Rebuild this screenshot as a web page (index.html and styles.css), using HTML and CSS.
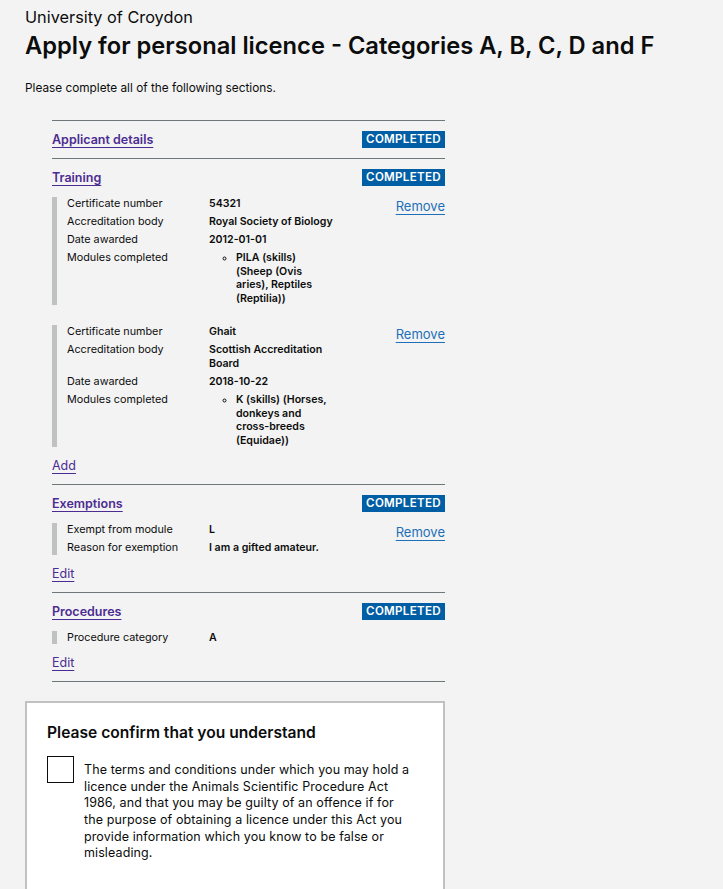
FILE: index.html
```html
<!DOCTYPE html>
<html lang="en">
<head>
<meta charset="utf-8">
<title>Apply for personal licence</title>
<link rel="stylesheet" href="styles.css">
</head>
<body>
<main class="page">
  <div class="org">University of Croydon</div>
  <h1 class="title">Apply for personal licence - Categories A, B, C, D and F</h1>
  <p class="intro">Please complete all of the following sections.</p>

  <div class="sections">
    <section class="section">
      <div class="section-head">
        <a class="section-link" href="#">Applicant details</a>
        <span class="tag">COMPLETED</span>
      </div>
    </section>

    <section class="section">
      <div class="section-head">
        <a class="section-link" href="#">Training</a>
        <span class="tag">COMPLETED</span>
      </div>
      <div class="entry">
        <dl class="rows">
          <dt>Certificate number</dt><dd>54321</dd>
          <dt>Accreditation body</dt><dd>Royal Society of Biology</dd>
          <dt>Date awarded</dt><dd>2012-01-01</dd>
          <dt>Modules completed</dt>
          <dd><ul class="modules"><li>PILA (skills) (Sheep (Ovis aries), Reptiles (Reptilia))</li></ul></dd>
        </dl>
        <a class="remove" href="#">Remove</a>
      </div>
      <div class="entry">
        <dl class="rows">
          <dt>Certificate number</dt><dd>Ghait</dd>
          <dt>Accreditation body</dt><dd>Scottish Accreditation Board</dd>
          <dt>Date awarded</dt><dd>2018-10-22</dd>
          <dt>Modules completed</dt>
          <dd><ul class="modules"><li>K (skills) (Horses, donkeys and cross-breeds (Equidae))</li></ul></dd>
        </dl>
        <a class="remove" href="#">Remove</a>
      </div>
      <a class="action" href="#">Add</a>
    </section>

    <section class="section">
      <div class="section-head">
        <a class="section-link" href="#">Exemptions</a>
        <span class="tag">COMPLETED</span>
      </div>
      <div class="entry">
        <dl class="rows">
          <dt>Exempt from module</dt><dd>L</dd>
          <dt>Reason for exemption</dt><dd>I am a gifted amateur.</dd>
        </dl>
        <a class="remove" href="#">Remove</a>
      </div>
      <a class="action" href="#">Edit</a>
    </section>

    <section class="section">
      <div class="section-head">
        <a class="section-link" href="#">Procedures</a>
        <span class="tag">COMPLETED</span>
      </div>
      <div class="entry">
        <dl class="rows">
          <dt>Procedure category</dt><dd>A</dd>
        </dl>
      </div>
      <a class="action" href="#">Edit</a>
    </section>
  </div>

  <div class="confirm">
    <h2 class="confirm-title">Please confirm that you understand</h2>
    <label class="check">
      <span class="box"></span>
      <span class="check-text">The terms and conditions under which you may hold a licence under the Animals Scientific Procedure Act 1986, and that you may be guilty of an offence if for the purpose of obtaining a licence under this Act you provide information which you know to be false or misleading.</span>
    </label>
  </div>
</main>
</body>
</html>
```

FILE: styles.css
```css
html, body {
  margin: 0;
  padding: 0;
  background: #f3f3f3;
}

body {
  font-family: Inter, "Noto Sans", sans-serif;
  color: #0b0c0c;
}

.page {
  padding: 7px 25px 0 25px;
}

.org {
  font-size: 16.3px;
  line-height: 20px;
}

.title {
  margin: 3px 0 0 0;
  font-size: 23.7px;
  line-height: 32px;
  font-weight: 600;
}

.intro {
  margin: 18px 0 0 0;
  font-size: 11.8px;
  line-height: 16px;
}

.sections {
  margin: 24px 0 0 27px;
  width: 393px;
  border-bottom: 1px solid #6f777b;
}

.section {
  border-top: 1px solid #6f777b;
  padding: 10px 0 10px 0;
}

.section-head {
  display: flex;
  justify-content: space-between;
  align-items: center;
  height: 17px;
}

.section-link {
  font-size: 12.5px;
  font-weight: 600;
  color: #4c2c92;
  text-decoration: underline;
  text-underline-offset: 3px;
}

.tag {
  background: #005ea5;
  color: #fff;
  font-size: 11.6px;
  font-weight: 600;
  letter-spacing: 0.3px;
  line-height: 17px;
  padding: 0 4px;
}

.entry {
  display: flex;
  align-items: flex-start;
  border-left: 5px solid #bfc1c3;
  padding-left: 10px;
  margin-top: 11px;
}

.entry + .entry {
  margin-top: 20px;
}

.rows {
  flex: 1;
  margin: 0;
  display: grid;
  grid-template-columns: 142px 130px;
  row-gap: 4.6px;
  font-size: 10.8px;
  line-height: 13.5px;
}

.rows dt {
  margin: 0;
}

.rows dd {
  margin: 0;
  font-size: 10.6px;
  font-weight: 600;
}

.modules {
  margin: 0;
  padding: 0 0 0 27px;
  width: 98px;
  list-style: circle;
}

.remove {
  font-size: 13px;
  line-height: 16px;
  margin-top: 1px;
  color: #1d70b8;
  text-decoration: underline;
  text-underline-offset: 3px;
}

.action {
  display: inline-block;
  margin-top: 11px;
  font-size: 12.5px;
  line-height: 16px;
  color: #4c2c92;
  text-decoration: underline;
  text-underline-offset: 3px;
}

.confirm {
  margin-top: 19px;
  width: 420px;
  background: #fff;
  border: 2px solid #bfc1c3;
  padding: 20px 0 20px 20px;
  box-sizing: border-box;
  min-height: 200px;
}

.confirm-title {
  margin: 0;
  font-size: 15.6px;
  line-height: 20px;
  font-weight: 600;
}

.check {
  display: flex;
  align-items: flex-start;
  margin-top: 13px;
}

.box {
  flex: none;
  width: 25px;
  height: 25px;
  border: 1px solid #0b0c0c;
}

.check-text {
  margin: 6px 0 0 10px;
  font-size: 12.5px;
  line-height: 16.6px;
  width: 328px;
  letter-spacing: 0.1px;
}
```
